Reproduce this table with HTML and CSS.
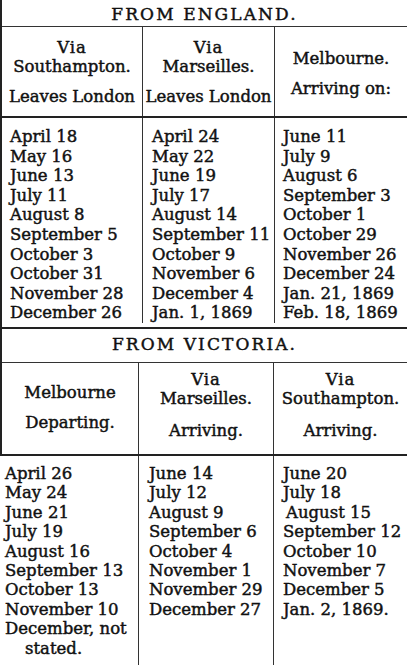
FILE: index.html
```html
<!DOCTYPE html>
<html lang="en">
<head>
<meta charset="utf-8">
<title>Mail timetable 1868</title>
<link rel="stylesheet" href="styles.css">
</head>
<body>
<div class="sheet">
  <div class="upper">
    <div class="title title-top">FROM ENGLAND.</div>
    <div class="grid g1 head head1">
      <div class="hcell">
        <div class="ln via">Via</div>
        <div class="ln">Southampton.</div>
        <div class="gap"></div>
        <div class="ln">Leaves London</div>
      </div>
      <div class="hcell div">
        <div class="ln via">Via</div>
        <div class="ln">Marseilles.</div>
        <div class="gap"></div>
        <div class="ln">Leaves London</div>
      </div>
      <div class="hcell div shift">
        <div class="ln">Melbourne.</div>
        <div class="gap"></div>
        <div class="ln">Arriving on:</div>
      </div>
    </div>
    <div class="grid g1 body1">
      <div class="col c1">
        <div>April 18</div>
        <div>May 16</div>
        <div>June 13</div>
        <div>July 11</div>
        <div>August 8</div>
        <div>September 5</div>
        <div>October 3</div>
        <div>October 31</div>
        <div>November 28</div>
        <div>December 26</div>
      </div>
      <div class="col c2 div">
        <div>April 24</div>
        <div>May 22</div>
        <div>June 19</div>
        <div>July 17</div>
        <div>August 14</div>
        <div>September 11</div>
        <div>October 9</div>
        <div>November 6</div>
        <div>December 4</div>
        <div>Jan. 1, 1869</div>
      </div>
      <div class="col c3 div">
        <div>June 11</div>
        <div>July 9</div>
        <div>August 6</div>
        <div>September 3</div>
        <div>October 1</div>
        <div>October 29</div>
        <div>November 26</div>
        <div>December 24</div>
        <div>Jan. 21, 1869</div>
        <div>Feb. 18, 1869</div>
      </div>
    </div>
    <div class="title title-second">FROM VICTORIA.</div>
    <div class="grid g2 head head2">
      <div class="hcell lift">
        <div class="ln">Melbourne</div>
        <div class="gap"></div>
        <div class="ln">Departing.</div>
      </div>
      <div class="hcell div lift2">
        <div class="ln via">Via</div>
        <div class="ln">Marseilles.</div>
        <div class="gap gap2"></div>
        <div class="ln">Arriving.</div>
      </div>
      <div class="hcell div lift2">
        <div class="ln via">Via</div>
        <div class="ln">Southampton.</div>
        <div class="gap gap2"></div>
        <div class="ln">Arriving.</div>
      </div>
    </div>
  </div>
  <div class="grid g3 body2">
    <div class="col d1">
      <div>April 26</div>
      <div>May 24</div>
      <div>June 21</div>
      <div>July 19</div>
      <div>August 16</div>
      <div>September 13</div>
      <div>October 13</div>
      <div>November 10</div>
      <div>December, not</div>
      <div class="hang">stated.</div>
    </div>
    <div class="col d2 div">
      <div>June 14</div>
      <div>July 12</div>
      <div>August 9</div>
      <div>September 6</div>
      <div>October 4</div>
      <div>November 1</div>
      <div>November 29</div>
      <div>December 27</div>
    </div>
    <div class="col d3 div">
      <div>June 20</div>
      <div>July 18</div>
      <div class="nudge">August 15</div>
      <div>September 12</div>
      <div>October 10</div>
      <div>November 7</div>
      <div>December 5</div>
      <div>Jan. 2, 1869.</div>
    </div>
  </div>
</div>
</body>
</html>
```

FILE: styles.css
```css
* {
  box-sizing: border-box;
}

html,
body {
  margin: 0;
  padding: 0;
  background: #ffffff;
}

body {
  font-family: "DejaVu Serif", "Liberation Serif", serif;
  font-size: 16.5px;
  color: #111111;
  -webkit-text-stroke: 0.45px #111111;
}

.sheet {
  width: 407px;
  height: 666px;
  overflow: hidden;
}

.upper {
  border-left: 2px solid #222;
}

.title {
  text-align: center;
  font-size: 17px;
  line-height: 20px;
  letter-spacing: 2.1px;
}

.title-top {
  padding: 4px 0 2px;
  border-bottom: 1.5px solid #333;
}

.title-second {
  padding: 5px 0 8px;
  border-top: 2px solid #222;
  border-bottom: 1.5px solid #333;
}

.grid {
  display: grid;
}

.g1 {
  grid-template-columns: 140px 132px 1fr;
}

.g2 {
  grid-template-columns: 136px 135px 1fr;
}

.g3 {
  grid-template-columns: 138px 135px 1fr;
}

.div {
  border-left: 1px solid #333;
}

.head1 {
  height: 89px;
}

.head2 {
  height: 91px;
}

.hcell {
  display: flex;
  flex-direction: column;
  justify-content: center;
  align-items: center;
  text-align: center;
  line-height: 19px;
  white-space: nowrap;
}

.via {
  letter-spacing: 1px;
}

.gap {
  height: 11px;
}

.gap2 {
  height: 13px;
}

.shift {
  padding-top: 4px;
}

.lift {
  padding-bottom: 2px;
}

.lift2 {
  padding-bottom: 6px;
}

.body1 {
  border-top: 2px solid #222;
  padding-bottom: 4px;
}

.body1 .col {
  padding-top: 9px;
  line-height: 19.6px;
  white-space: nowrap;
}

.c1 {
  padding-left: 8px;
}

.c2 {
  padding-left: 9px;
}

.c3 {
  padding-left: 8px;
}

.body2 {
  border-top: 2px solid #222;
  height: 211px;
}

.body2 .col {
  padding-top: 8px;
  line-height: 19.4px;
  white-space: nowrap;
}

.d1 {
  padding-left: 5px;
}

.d2 {
  padding-left: 10px;
}

.d3 {
  padding-left: 9px;
}

.hang {
  padding-left: 20px;
}

.nudge {
  padding-left: 3px;
}
```
